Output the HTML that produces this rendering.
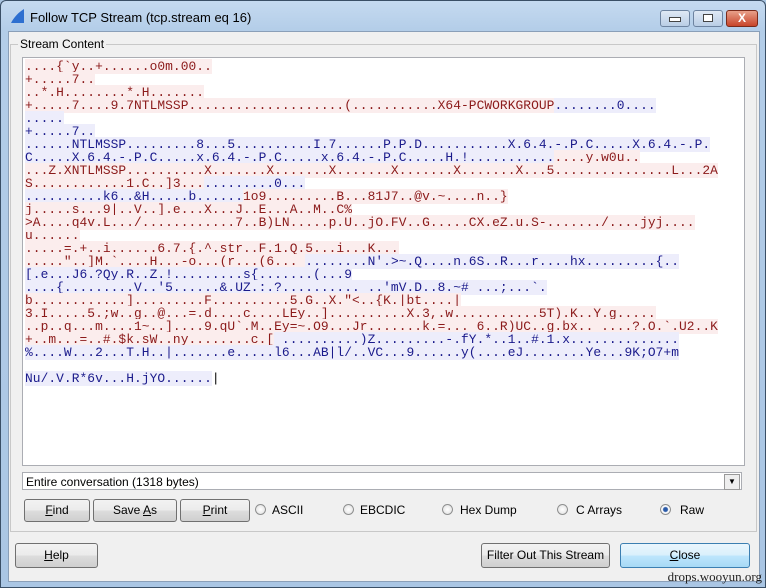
<!DOCTYPE html>
<html><head><meta charset="utf-8"><style>
body{margin:0;width:766px;height:588px;overflow:hidden;background:#a9c4e0;font-family:"Liberation Sans",sans-serif;font-size:12px;position:relative}
.frame{position:absolute;left:0;top:0;width:764px;height:586px;border:1px solid #3a4f66;border-radius:6px 6px 0 0;background:linear-gradient(#c5daf0,#b3cde8 30px,#aac6e4)}
.title{position:absolute;left:30px;top:10px;font-size:13px;color:#000}
.client{position:absolute;left:8px;top:31px;width:750px;height:549px;background:#f0f0f0;border:1px solid #8a9fb8}
.wb{position:absolute;top:10px;height:15px;border:1px solid #6d83a0;border-radius:3px;background:linear-gradient(#dfe9f5,#b9cde5)}
.group{position:absolute;left:10px;top:44px;width:745px;height:486px;border:1px solid #c8c8c8}
.glabel{position:absolute;left:18px;top:37px;background:#f0f0f0;padding:0 2px;font-size:12px}
.text{position:absolute;left:22px;top:57px;width:721px;height:407px;background:#fff;border:1px solid #abadb3;overflow:hidden}
pre{margin:0;padding:2px 0 0 2px;font-family:"Liberation Mono",monospace;font-size:12.9px;line-height:13px;letter-spacing:0.05px}
.r{color:#8b1a1a;background:#fbeded}.b{color:#1a1a8b;background:#ededfb}
.combo{position:absolute;left:22px;top:472px;width:720px;height:18px;background:#fff;border:1px solid #abadb3;font-size:12px;line-height:18px;padding-left:3px;box-sizing:border-box}
.arrow{position:absolute;right:1px;top:1px;width:14px;height:14px;border:1px solid #999;background:#eee;font-size:8px;text-align:center;line-height:14px}
.btn{position:absolute;border:1px solid #707070;border-radius:3px;background:linear-gradient(#f2f2f2,#ebebeb 50%,#dddddd 51%,#cfcfcf);text-align:center;font-size:12px;box-sizing:border-box}
.rad{position:absolute;top:504px;width:11px;height:11px;border:1px solid #8e8f8f;border-radius:50%;background:radial-gradient(#fff,#ddd);box-sizing:border-box}
.rl{position:absolute;top:503px;font-size:12px}
</style></head><body>
<div class="frame"></div>
<svg style="position:absolute;left:9px;top:8px" width="16" height="16"><path d="M2 15 L15 15 L15 1 C10 4 5 9 2 15Z" fill="#2d6fd0"/></svg>
<div class="title">Follow TCP Stream (tcp.stream eq 16)</div>
<div class="wb" style="left:660px;width:28px"><div style="margin:6px auto 0;width:10px;height:3px;border:1px solid #444;background:#fff"></div></div>
<div class="wb" style="left:693px;width:28px"><div style="margin:3px auto 0;width:8px;height:6px;border:1px solid #444;background:#fff"></div></div>
<div class="wb" style="left:726px;width:30px;background:linear-gradient(#e8a08a,#c8452a);border-color:#7a2a1a;color:#fff;font-weight:bold;text-align:center;font-size:12px;line-height:15px">X</div>
<div class="client"></div>
<div class="group"></div>
<div class="glabel">Stream Content</div>
<div class="text"><pre><span class="r">....{`y..+......o0m.00..</span>
<span class="r">+.....7..</span>
<span class="r">..*.H........*.H.......</span>
<span class="r">+.....7....9.7NTLMSSP....................(...........X64-PCWORKGROUP</span><span class="b">........0....</span>
<span class="b">.....</span>
<span class="b">+.....7..</span>
<span class="b">......NTLMSSP.........8...5..........I.7......P.P.D...........X.6.4.-.P.C.....X.6.4.-.P.</span>
<span class="b">C.....X.6.4.-.P.C.....x.6.4.-.P.C.....x.6.4.-.P.C.....H.!...........</span><span class="r">....y.w0u..</span>
<span class="r">...Z.XNTLMSSP..........X.......X.......X.......X.......X.......X...5...............L...2A</span>
<span class="r">S............1.C..]3...</span><span class="b">.........0...</span>
<span class="b">..........k6..&amp;H.....b......</span><span class="r">1o9.........B...81J7..@v.~....n..}</span>
<span class="r">j.....s...9|..V..].e...X...J..E...A..M..C%</span>
<span class="r">&gt;A....q4v.L.../............7..B)LN.....p.U..jO.FV..G.....CX.eZ.u.S-......./....jyj....</span>
<span class="r">u......</span>
<span class="r">.....=.+..i......6.7.{.^.str..F.1.Q.5...i...K...</span>
<span class="r">....."..]M.`....H...-o...(r...(6... </span><span class="b">........N'.&gt;~.Q....n.6S..R...r....hx.........{..</span>
<span class="b">[.e...J6.?Qy.R..Z.!.........s{.......(...9</span>
<span class="b">....{.........V..'5......&amp;.UZ.:.?.......... ..'mV.D..8.~# ...;...`.</span>
<span class="r">b............].........F..........5.G..X."&lt;..{K.|bt....|</span>
<span class="r">3.I.....5.;w..g..@...=.d....c....LEy..]..........X.3,.w...........5T).K..Y.g.....</span>
<span class="r">..p..q...m....1~..]....9.qU`.M..Ey=~.O9...Jr.......k.=... 6..R)UC..g.bx.. ....?.O.`.U2..K</span>
<span class="r">+..m...=..#.$k.sW..ny........c.[</span><span class="b"> ..........)Z.........-.fY.*..1..#.1.x..............</span>
<span class="b">%....W...2...T.H..|.......e.....l6...AB|l/..VC...9......y(....eJ........Ye...9K;O7+m</span>

<span class="b">Nu/.V.R*6v...H.jYO......</span>|</pre></div>
<div class="combo">Entire conversation (1318 bytes)<div class="arrow">▼</div></div>
<div class="btn" style="left:24px;top:499px;width:66px;height:23px;line-height:21px"><u>F</u>ind</div>
<div class="btn" style="left:93px;top:499px;width:84px;height:23px;line-height:21px">Save <u>A</u>s</div>
<div class="btn" style="left:180px;top:499px;width:70px;height:23px;line-height:21px"><u>P</u>rint</div>
<div class="rad" style="left:255px"></div><div class="rl" style="left:272px">ASCII</div>
<div class="rad" style="left:343px"></div><div class="rl" style="left:360px">EBCDIC</div>
<div class="rad" style="left:442px"></div><div class="rl" style="left:460px">Hex Dump</div>
<div class="rad" style="left:557px"></div><div class="rl" style="left:576px">C Arrays</div>
<div class="rad" style="left:660px;background:radial-gradient(#2a5aa8 2px,#fff 3px,#ddd)"></div><div class="rl" style="left:680px">Raw</div>
<div class="btn" style="left:15px;top:543px;width:83px;height:25px;line-height:23px"><u>H</u>elp</div>
<div class="btn" style="left:481px;top:543px;width:129px;height:25px;line-height:23px">Filter Out This Stream</div>
<div class="btn" style="left:620px;top:543px;width:130px;height:25px;line-height:23px;border-color:#3c7fb1;background:linear-gradient(#eaf6fd,#d9f0fc 50%,#bee6fd 51%,#a7d9f5)"><u>C</u>lose</div>
<div style="position:absolute;right:4px;top:569px;font-family:'Liberation Serif',serif;font-size:13px;color:#222">drops.wooyun.org</div>
</body></html>
